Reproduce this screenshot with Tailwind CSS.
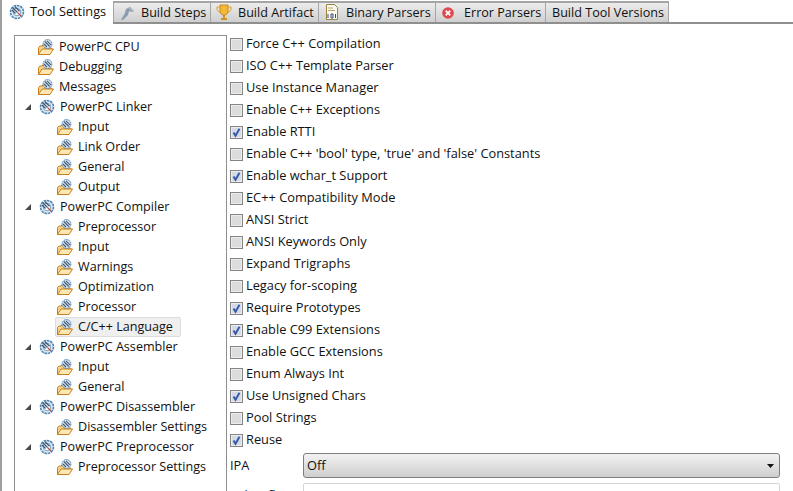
<!DOCTYPE html>
<html lang="en">
<head>
    <meta charset="UTF-8">
    <title>Tool Settings</title>
    <script src="https://cdn.jsdelivr.net/npm/@tailwindcss/browser@4"></script>
</head>
<body class="bg-white w-[793px] h-[491px] overflow-hidden font-['Open_Sans',sans-serif] text-[12.75px] text-[#111]">
    <svg class="hidden">
        <symbol id="gear" viewBox="0 0 16 16">
            <circle cx="8" cy="8" r="6.5" fill="#dfe9f2" stroke="#4f86b3" stroke-width="1.6" stroke-dasharray="2.6 0.7"/>
            <circle cx="8" cy="8" r="3.8" fill="#fff" stroke="#7ba0c0"/>
            <path d="M3.500 3.500L8.500 8.500M6 2.800L10.500 7.300M3 6L6.500 9.500" stroke="#3f5a78" stroke-width="1.300"/>
            <path d="M8.500 8.500L12 12" stroke="#b8503f" stroke-width="1.100"/>
        </symbol>
        <symbol id="folder" viewBox="0 0 16 16">
            <path d="M0.500 15.500V8.500L2 7H4.500V6H7V9H13L14 9.500L11.500 15.500Z" fill="#f8d48a" stroke="#c8801e"/>
            <path d="M0.500 15.500L4 10H15.500L12 15.500Z" fill="#fde8b4" stroke="#c8801e"/>
            <circle cx="9.500" cy="5" r="4.400" fill="#e0e9f2" stroke="#4f86b3" stroke-dasharray="1.700 0.500"/>
            <path d="M6.800 2.500L11.800 7.500M9 1.800L13 5.800M6 5L9 8" stroke="#3f5a78" stroke-width="1.100"/>
        </symbol>
        <symbol id="check" viewBox="0 0 13 13">
            <rect x="0.500" y="0.500" width="12" height="12" fill="#ececec" stroke="#858585"/>
            <rect x="2" y="2" width="9" height="9" fill="#dcdcdc"/>
        </symbol>
        <symbol id="checked" viewBox="0 0 13 13">
            <rect x="0.500" y="0.500" width="12" height="12" fill="#ececec" stroke="#858585"/>
            <rect x="2" y="2" width="9" height="9" fill="#d6dae4"/>
            <path d="M3.500 6.500L5.500 9.800L9.500 2.800" fill="none" stroke="#3558a8" stroke-width="1.900"/>
        </symbol>
        <symbol id="arrow" viewBox="0 0 7 7">
            <path d="M7 0V7H0Z" fill="#4a4a4a"/>
        </symbol>
    </svg>

    <div class="h-full flex flex-col border-l-2 border-[#a0a0a0]">
        <!-- Tabs -->
        <div class="h-[24px] flex shrink-0">
            <div class="w-[111px] h-[26px] bg-white relative z-10 flex items-center pl-[7px] gap-[5px] pb-[3px]">
                <svg class="w-[16px] h-[16px]"><use href="#gear"/></svg>
                <span>Tool Settings</span>
            </div>
            <div class="flex-1 flex border-b-2 border-[#8f8f8f] pt-[1px] text-[12.6px]">
                <div class="w-[98px] flex items-center pl-[6px] gap-[5px] border-t-2 border-l border-r border-[#a5a5a5] bg-linear-to-b from-[#ececec] to-[#cfcfcf]">
                    <svg class="w-[16px] h-[16px]" viewBox="0 0 16 16"><path d="M1 15L5 8L6 4L10 2L14 6L12 7L9 6L8 10L3 15Z" fill="#8a9cb0"/><path d="M9 3L13 6" stroke="#c9c9c9"/></svg>
                    <span class="pt-[1px]">Build Steps</span>
                </div>
                <div class="w-[108px] flex items-center pl-[5px] gap-[6px] border-t-2 border-r border-[#a5a5a5] bg-linear-to-b from-[#ececec] to-[#cfcfcf]">
                    <svg class="w-[16px] h-[17px]" viewBox="0 0 16 17"><path d="M4 1H12V7C12 10 10 11 8 11C6 11 4 10 4 7Z" fill="#f5b93a" stroke="#c9871a"/><path d="M4 3H1V5C1 7 3 8 4 8M12 3H15V5C15 7 13 8 12 8" fill="none" stroke="#e0a020"/><path d="M8 11V14M5 15H11" stroke="#d0921c" stroke-width="2"/></svg>
                    <span class="pt-[1px]">Build Artifact</span>
                </div>
                <div class="w-[117px] flex items-center pl-[6px] gap-[7px] border-t-2 border-r border-[#a5a5a5] bg-linear-to-b from-[#ececec] to-[#cfcfcf]">
                    <svg class="w-[14px] h-[17px]" viewBox="0 0 14 17"><path d="M1.500 0.500H9.500L12.500 3.500V15.500H1.500Z" fill="#fbf8ee" stroke="#9c8544"/><path d="M3 4H8M3 6.500H10" stroke="#b7a56f"/><path d="M3 10V14M6 10H8V14H6ZM10.500 10V14" fill="none" stroke="#324c78"/></svg>
                    <span class="pt-[1px]">Binary Parsers</span>
                </div>
                <div class="w-[110px] flex items-center pl-[6px] gap-[10px] border-t-2 border-r border-[#a5a5a5] bg-linear-to-b from-[#ececec] to-[#cfcfcf]">
                    <svg class="w-[12px] h-[12px]" viewBox="0 0 12 12"><circle cx="6" cy="6" r="5.800" fill="#e0474c"/><path d="M3.700 3.700L8.300 8.300M8.300 3.700L3.700 8.300" stroke="#fff" stroke-width="1.800"/></svg>
                    <span class="pt-[1px]">Error Parsers</span>
                </div>
                <div class="w-[123px] flex items-center pl-[6px] border-t-2 border-r border-[#a5a5a5] bg-linear-to-b from-[#ececec] to-[#cfcfcf]">
                    <span class="pt-[1px]">Build Tool Versions</span>
                </div>
                <div class="flex-1"></div>
            </div>
        </div>

        <!-- Body -->
        <div class="flex-1 flex pl-[12px] pt-[11px] min-h-0">
            <!-- Tree -->
            <div class="w-[213px] border-l border-t border-r border-[#8f8f8f] pt-[1px] shrink-0 flex flex-col text-[12.6px]">
                <div class="h-[20px] flex items-center pl-[23px] gap-[5px]"><svg class="w-[16px] h-[16px]"><use href="#folder"/></svg>PowerPC CPU</div>
                <div class="h-[20px] flex items-center pl-[23px] gap-[5px]"><svg class="w-[16px] h-[16px]"><use href="#folder"/></svg>Debugging</div>
                <div class="h-[20px] flex items-center pl-[23px] gap-[5px]"><svg class="w-[16px] h-[16px]"><use href="#folder"/></svg>Messages</div>
                <div class="h-[20px] flex items-center pl-[10px] gap-[5px]"><svg class="w-[6px] h-[6px] mr-[3px]"><use href="#arrow"/></svg><svg class="w-[16px] h-[16px]"><use href="#gear"/></svg>PowerPC Linker</div>
                <div class="h-[20px] flex items-center pl-[42px] gap-[5px]"><svg class="w-[16px] h-[16px]"><use href="#folder"/></svg>Input</div>
                <div class="h-[20px] flex items-center pl-[42px] gap-[5px]"><svg class="w-[16px] h-[16px]"><use href="#folder"/></svg>Link Order</div>
                <div class="h-[20px] flex items-center pl-[42px] gap-[5px]"><svg class="w-[16px] h-[16px]"><use href="#folder"/></svg>General</div>
                <div class="h-[20px] flex items-center pl-[42px] gap-[5px]"><svg class="w-[16px] h-[16px]"><use href="#folder"/></svg>Output</div>
                <div class="h-[20px] flex items-center pl-[10px] gap-[5px]"><svg class="w-[6px] h-[6px] mr-[3px]"><use href="#arrow"/></svg><svg class="w-[16px] h-[16px]"><use href="#gear"/></svg>PowerPC Compiler</div>
                <div class="h-[20px] flex items-center pl-[42px] gap-[5px]"><svg class="w-[16px] h-[16px]"><use href="#folder"/></svg>Preprocessor</div>
                <div class="h-[20px] flex items-center pl-[42px] gap-[5px]"><svg class="w-[16px] h-[16px]"><use href="#folder"/></svg>Input</div>
                <div class="h-[20px] flex items-center pl-[42px] gap-[5px]"><svg class="w-[16px] h-[16px]"><use href="#folder"/></svg>Warnings</div>
                <div class="h-[20px] flex items-center pl-[42px] gap-[5px]"><svg class="w-[16px] h-[16px]"><use href="#folder"/></svg>Optimization</div>
                <div class="h-[20px] flex items-center pl-[42px] gap-[5px]"><svg class="w-[16px] h-[16px]"><use href="#folder"/></svg>Processor</div>
                <div class="h-[20px] flex items-center ml-[40px] pl-[1px] w-[126px] gap-[5px] bg-[#efefef] border border-[#dcdcdc] rounded-[2px]"><svg class="w-[16px] h-[16px]"><use href="#folder"/></svg>C/C++ Language</div>
                <div class="h-[20px] flex items-center pl-[10px] gap-[5px]"><svg class="w-[6px] h-[6px] mr-[3px]"><use href="#arrow"/></svg><svg class="w-[16px] h-[16px]"><use href="#gear"/></svg>PowerPC Assembler</div>
                <div class="h-[20px] flex items-center pl-[42px] gap-[5px]"><svg class="w-[16px] h-[16px]"><use href="#folder"/></svg>Input</div>
                <div class="h-[20px] flex items-center pl-[42px] gap-[5px]"><svg class="w-[16px] h-[16px]"><use href="#folder"/></svg>General</div>
                <div class="h-[20px] flex items-center pl-[10px] gap-[5px]"><svg class="w-[6px] h-[6px] mr-[3px]"><use href="#arrow"/></svg><svg class="w-[16px] h-[16px]"><use href="#gear"/></svg>PowerPC Disassembler</div>
                <div class="h-[20px] flex items-center pl-[42px] gap-[5px]"><svg class="w-[16px] h-[16px]"><use href="#folder"/></svg>Disassembler Settings</div>
                <div class="h-[20px] flex items-center pl-[10px] gap-[5px]"><svg class="w-[6px] h-[6px] mr-[3px]"><use href="#arrow"/></svg><svg class="w-[16px] h-[16px]"><use href="#gear"/></svg>PowerPC Preprocessor</div>
                <div class="h-[20px] flex items-center pl-[42px] gap-[5px]"><svg class="w-[16px] h-[16px]"><use href="#folder"/></svg>Preprocessor Settings</div>
            </div>

            <!-- Options -->
            <div class="flex-1 pl-[3px] flex flex-col -mt-[2px] text-[12.8px]">
                <div class="h-[22px] flex items-center gap-[3px] shrink-0"><svg class="w-[13px] h-[13px]"><use href="#check"/></svg>Force C++ Compilation</div>
                <div class="h-[22px] flex items-center gap-[3px] shrink-0"><svg class="w-[13px] h-[13px]"><use href="#check"/></svg>ISO C++ Template Parser</div>
                <div class="h-[22px] flex items-center gap-[3px] shrink-0"><svg class="w-[13px] h-[13px]"><use href="#check"/></svg>Use Instance Manager</div>
                <div class="h-[22px] flex items-center gap-[3px] shrink-0"><svg class="w-[13px] h-[13px]"><use href="#check"/></svg>Enable C++ Exceptions</div>
                <div class="h-[22px] flex items-center gap-[3px] shrink-0"><svg class="w-[13px] h-[13px]"><use href="#checked"/></svg>Enable RTTI</div>
                <div class="h-[22px] flex items-center gap-[3px] shrink-0"><svg class="w-[13px] h-[13px]"><use href="#check"/></svg>Enable C++ 'bool' type, 'true' and 'false' Constants</div>
                <div class="h-[22px] flex items-center gap-[3px] shrink-0"><svg class="w-[13px] h-[13px]"><use href="#checked"/></svg>Enable wchar_t Support</div>
                <div class="h-[22px] flex items-center gap-[3px] shrink-0"><svg class="w-[13px] h-[13px]"><use href="#check"/></svg>EC++ Compatibility Mode</div>
                <div class="h-[22px] flex items-center gap-[3px] shrink-0"><svg class="w-[13px] h-[13px]"><use href="#check"/></svg>ANSI Strict</div>
                <div class="h-[22px] flex items-center gap-[3px] shrink-0"><svg class="w-[13px] h-[13px]"><use href="#check"/></svg>ANSI Keywords Only</div>
                <div class="h-[22px] flex items-center gap-[3px] shrink-0"><svg class="w-[13px] h-[13px]"><use href="#check"/></svg>Expand Trigraphs</div>
                <div class="h-[22px] flex items-center gap-[3px] shrink-0"><svg class="w-[13px] h-[13px]"><use href="#check"/></svg>Legacy for-scoping</div>
                <div class="h-[22px] flex items-center gap-[3px] shrink-0"><svg class="w-[13px] h-[13px]"><use href="#checked"/></svg>Require Prototypes</div>
                <div class="h-[22px] flex items-center gap-[3px] shrink-0"><svg class="w-[13px] h-[13px]"><use href="#checked"/></svg>Enable C99 Extensions</div>
                <div class="h-[22px] flex items-center gap-[3px] shrink-0"><svg class="w-[13px] h-[13px]"><use href="#check"/></svg>Enable GCC Extensions</div>
                <div class="h-[22px] flex items-center gap-[3px] shrink-0"><svg class="w-[13px] h-[13px]"><use href="#check"/></svg>Enum Always Int</div>
                <div class="h-[22px] flex items-center gap-[3px] shrink-0"><svg class="w-[13px] h-[13px]"><use href="#checked"/></svg>Use Unsigned Chars</div>
                <div class="h-[22px] flex items-center gap-[3px] shrink-0"><svg class="w-[13px] h-[13px]"><use href="#check"/></svg>Pool Strings</div>
                <div class="h-[22px] flex items-center gap-[3px] shrink-0"><svg class="w-[13px] h-[13px]"><use href="#checked"/></svg>Reuse</div>

                <div class="flex items-center mt-[2px] shrink-0">
                    <span class="w-[73px]">IPA</span>
                    <div class="w-[477px] h-[25px] border border-[#7f7f7f] rounded-[3px] bg-linear-to-b from-[#f2f2f2] to-[#cfcfcf] flex items-center justify-between pl-[3px] pr-[5px]">
                        <span>Off</span>
                        <svg class="w-[7px] h-[4px]" viewBox="0 0 7 4"><path d="M0 0H7L3.500 4Z" fill="#111"/></svg>
                    </div>
                </div>
                <div class="flex mt-[5px] shrink-0">
                    <span class="w-[73px] pt-[3px]">Other flags</span>
                    <div class="w-[477px] h-[30px] border border-[#d5d5d5] rounded-[2px] bg-white"></div>
                </div>
            </div>
        </div>
    </div>
</body>
</html>
